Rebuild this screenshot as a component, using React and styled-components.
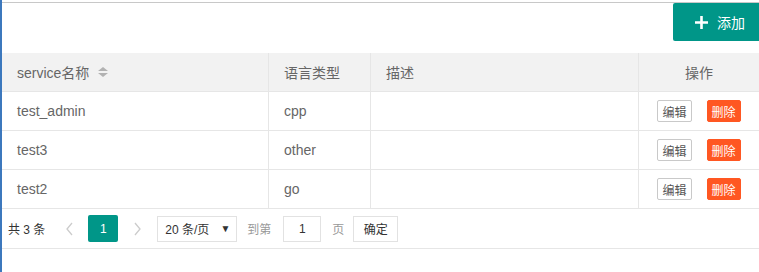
import styled, { createGlobalStyle } from "styled-components";

const GlobalStyle = createGlobalStyle`
  html, body {
    margin: 0;
    padding: 0;
    background: #fff;
  }
  body {
    font-family: "Liberation Sans", "Noto Sans CJK SC", sans-serif;
    font-size: 14px;
    color: #666;
  }
`;

const Page = styled.div`
  height: 272px;
  padding-top: 2px;
  box-sizing: border-box;
  border-left: 2px solid #3c78bd;
`;

const Panel = styled.div`
  border-top: 1px solid #c8c8c8;
`;

const Toolbar = styled.div`
  display: flex;
  justify-content: flex-end;
  padding-bottom: 12px;
`;

const AddButton = styled.button`
  display: flex;
  align-items: center;
  gap: 9px;
  height: 38px;
  width: 86px;
  padding: 0 0 0 22px;
  border: none;
  border-radius: 2px 0 0 2px;
  background: #009688;
  color: #fff;
  font-family: inherit;
  font-size: 14px;
`;

const Table = styled.div`
  display: grid;
  grid-template-columns: 267px 102px 268px 1fr;
`;

const Cell = styled.div`
  height: 38px;
  display: flex;
  align-items: center;
  justify-content: ${(p) => (p.$center ? "center" : "flex-start")};
  padding: 0 15px;
  border-bottom: 1px solid #e6e6e6;
  border-right: ${(p) => (p.$last ? "none" : "1px solid #e6e6e6")};
  background: ${(p) => (p.$head ? "#f2f2f2" : "#fff")};
  color: #666;
  font-size: 14px;
  white-space: nowrap;
`;

const SortIcon = styled.span`
  display: inline-flex;
  flex-direction: column;
  gap: 2px;
  margin-left: 9px;
  &::before,
  &::after {
    content: "";
    border-left: 5px solid transparent;
    border-right: 5px solid transparent;
  }
  &::before {
    border-bottom: 4px solid #b2b2b2;
  }
  &::after {
    border-top: 4px solid #b2b2b2;
  }
`;

const SmallButton = styled.span`
  display: inline-flex;
  align-items: center;
  height: 22px;
  padding: 0 4px;
  box-sizing: border-box;
  font-size: 12px;
  border-radius: 2px;
  border: 1px solid ${(p) => (p.$danger ? "#ff5722" : "#c9c9c9")};
  background: ${(p) => (p.$danger ? "#ff5722" : "#fff")};
  color: ${(p) => (p.$danger ? "#fff" : "#555")};
  & + & {
    margin-left: 15px;
  }
`;

const Pager = styled.div`
  display: flex;
  align-items: center;
  height: 39px;
  padding: 0 6px;
  border-bottom: 1px solid #e6e6e6;
  font-size: 12px;
  color: #333;
`;

const PageArrow = styled.span`
  display: inline-flex;
  width: 20px;
  justify-content: center;
  margin: ${(p) => p.$margin};
`;

const Current = styled.span`
  display: inline-flex;
  align-items: center;
  justify-content: center;
  width: 30px;
  height: 27px;
  background: #009688;
  color: #fff;
  border-radius: 2px;
`;

const Select = styled.span`
  display: inline-flex;
  align-items: center;
  justify-content: space-between;
  width: 80px;
  height: 26px;
  box-sizing: border-box;
  padding: 0 6px 0 7px;
  margin-left: 10px;
  border: 1px solid #e2e2e2;
  color: #333;
  font-size: 12px;
`;

const Muted = styled.span`
  color: #999;
  margin: ${(p) => p.$margin};
`;

const PageInput = styled.span`
  display: inline-flex;
  align-items: center;
  justify-content: center;
  width: 38px;
  height: 26px;
  box-sizing: border-box;
  border: 1px solid #e2e2e2;
  color: #333;
  margin-left: 12px;
`;

const Confirm = styled.span`
  display: inline-flex;
  align-items: center;
  justify-content: center;
  width: 45px;
  height: 26px;
  box-sizing: border-box;
  border: 1px solid #e2e2e2;
  color: #333;
`;

const rows = [
  { name: "test_admin", lang: "cpp" },
  { name: "test3", lang: "other" },
  { name: "test2", lang: "go" },
];

function Plus() {
  return (
    <svg width="13" height="13" viewBox="0 0 13 13">
      <path d="M6.5 0v13M0 6.5h13" stroke="#fff" strokeWidth="2.6" />
    </svg>
  );
}

function Chevron({ dir }) {
  const d = dir === "left" ? "M6 1L1 7l5 6" : "M1 1l5 6-5 6";
  return (
    <svg width="7" height="14" viewBox="0 0 7 14">
      <path d={d} fill="none" stroke="#ccc" strokeWidth="1.3" />
    </svg>
  );
}

export default function App() {
  return (
    <Page>
      <GlobalStyle />
      <Panel>
        <Toolbar>
          <AddButton>
            <Plus />
            添加
          </AddButton>
        </Toolbar>
        <Table>
          <Cell $head>
            service名称
            <SortIcon />
          </Cell>
          <Cell $head>语言类型</Cell>
          <Cell $head>描述</Cell>
          <Cell $head $center $last>
            操作
          </Cell>
          {rows.map((r) => (
            <>
              <Cell key={r.name + "n"}>{r.name}</Cell>
              <Cell key={r.name + "l"}>{r.lang}</Cell>
              <Cell key={r.name + "d"} />
              <Cell key={r.name + "o"} $center $last>
                <SmallButton>编辑</SmallButton>
                <SmallButton $danger>删除</SmallButton>
              </Cell>
            </>
          ))}
        </Table>
        <Pager>
          <span>共 3 条</span>
          <PageArrow $margin="0 9px 0 14px">
            <Chevron dir="left" />
          </PageArrow>
          <Current>1</Current>
          <PageArrow $margin="0 0 0 9px">
            <Chevron dir="right" />
          </PageArrow>
          <Select>
            20 条/页<span style={{ fontSize: 10 }}>▼</span>
          </Select>
          <Muted $margin="0 0 0 10px">到第</Muted>
          <PageInput>1</PageInput>
          <Muted $margin="0 9px 0 11px">页</Muted>
          <Confirm>确定</Confirm>
        </Pager>
      </Panel>
    </Page>
  );
}
